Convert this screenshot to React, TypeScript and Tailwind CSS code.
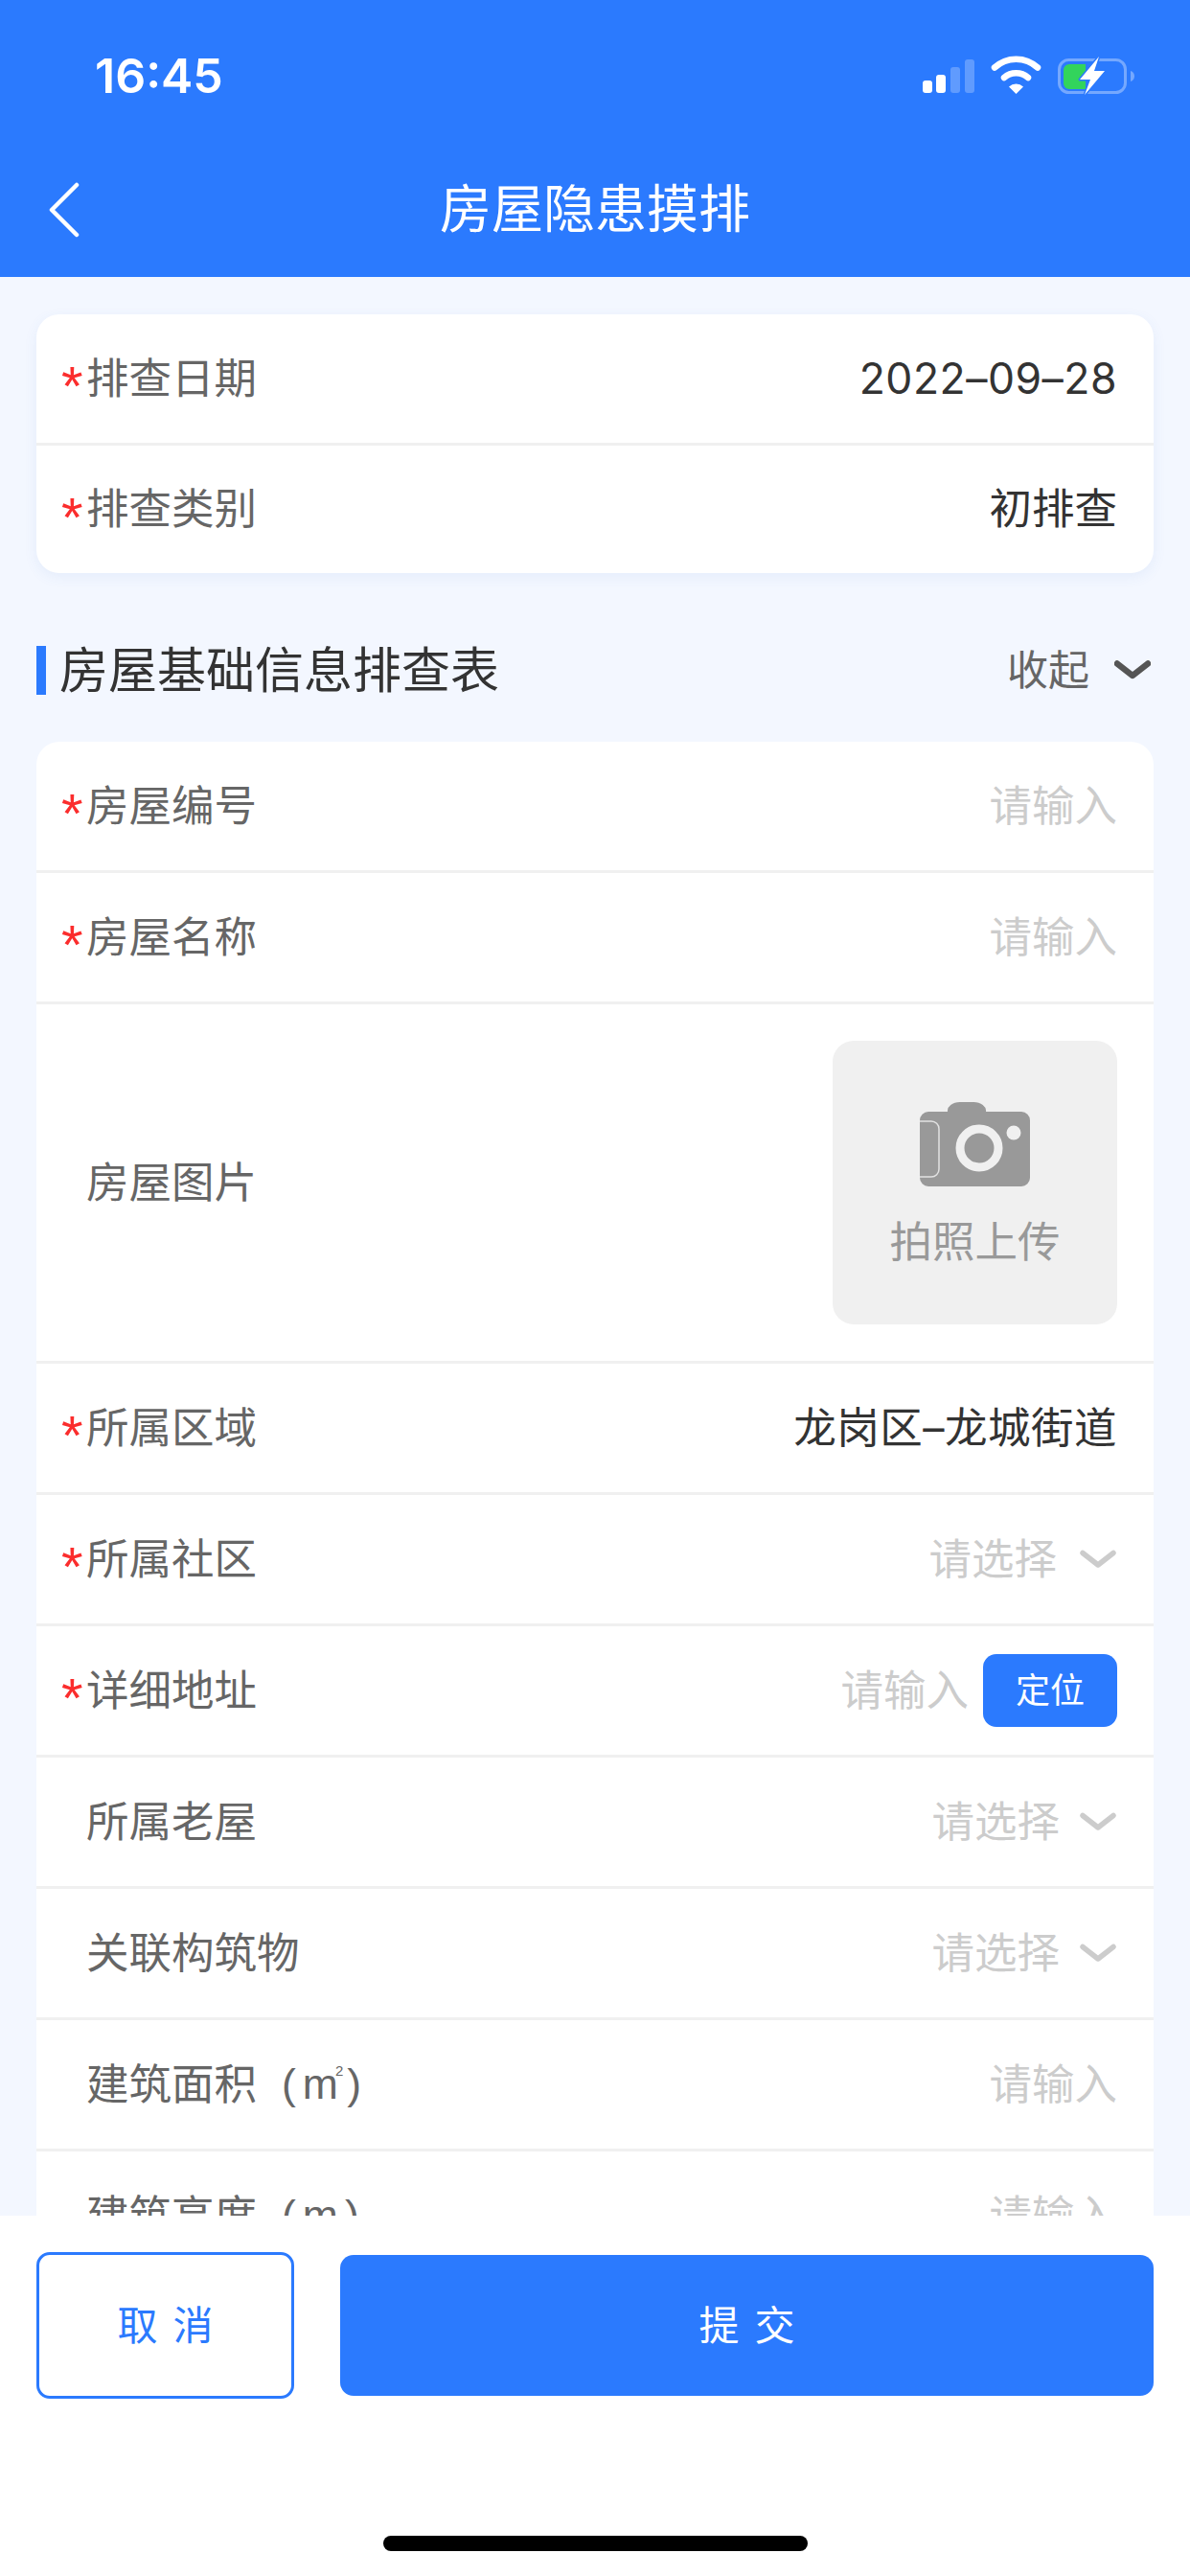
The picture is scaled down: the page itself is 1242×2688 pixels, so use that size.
import type { ReactNode } from 'react';

const font = "font-['Inter','Noto_Sans_CJK_SC',sans-serif]";

function StatusIcons() {
  return (
    <svg width="225" height="44" viewBox="960 56 225 44" className="block">
      <rect x="963" y="83" width="10" height="13" rx="3" fill="#fff" />
      <rect x="977" y="77" width="10" height="19" rx="3" fill="#fff" />
      <rect x="992" y="69" width="10" height="27" rx="3" fill="#fff" opacity="0.25" />
      <rect x="1007" y="61" width="10" height="35" rx="3" fill="#fff" opacity="0.25" />
      {/* wifi */}
      <path d="M1038 69.500a33 33 0 0 1 45 0" fill="none" stroke="#fff" strokeWidth="6.500" strokeLinecap="round" />
      <path d="M1048 80a19 19 0 0 1 25 0" fill="none" stroke="#fff" strokeWidth="6.500" strokeLinecap="round" />
      <path d="M1053 89.500l7.500 7.500 7.500-7.500a11 11 0 0 0-15 0z" fill="#fff" />
      {/* battery */}
      <rect x="1105.500" y="61.500" width="69" height="34" rx="10" fill="none" stroke="#fff" strokeOpacity="0.35" strokeWidth="3" />
      <path d="M1180 73v11a6 6 0 0 0 4-5.500 6 6 0 0 0-4-5.500z" fill="#fff" fillOpacity="0.35" />
      <rect x="1110" y="66" width="44" height="26" rx="6" fill="#32d45c" clipPath="inset(0 21px 0 0)" />
      <path d="M1147 58l-20 24h11l-6 16 21-25h-11z" fill="#fff" stroke="#2b7afe" strokeWidth="3" paintOrder="stroke" strokeLinejoin="round" />
    </svg>
  );
}

function CameraIcon() {
  return (
    <svg width="116" height="88" viewBox="0 0 116 88" className="block">
      <path
        d="M9 10h20a13 9 0 0 1 13-10h14a13 9 0 0 1 13 10h37a9 9 0 0 1 9 9v60a9 9 0 0 1-9 9H9a9 9 0 0 1-9-9V19a9 9 0 0 1 9-9z"
        fill="#999"
      />
      <path d="M0 20h12a8 8 0 0 1 8 8v42a8 8 0 0 1-8 8H0" fill="none" stroke="#e2e2e2" strokeWidth="1.500" />
      <circle cx="62" cy="48" r="20" fill="none" stroke="#f0f0f0" strokeWidth="9" />
      <circle cx="98" cy="32" r="7.500" fill="#f0f0f0" />
    </svg>
  );
}

function Chevron({ color, stroke = 5.500 }: { color: string; stroke?: number }) {
  return (
    <svg width="38" height="21" viewBox="0 0 38 21" className="block shrink-0">
      <path d="M3 3.500 19 16 35 3.500" fill="none" stroke={color} strokeWidth={stroke} strokeLinecap="round" strokeLinejoin="round" />
    </svg>
  );
}

function Row({
  label,
  required,
  last,
  children,
}: {
  label: ReactNode;
  required?: boolean;
  last?: boolean;
  children?: ReactNode;
}) {
  return (
    <div className={`flex items-center justify-between pl-[26px] pr-[38px] ${last ? 'h-[133px]' : 'h-[137px] border-b-[3px] border-[#f0f0f0]'}`}>
      <div className="flex items-center text-[44.500px] leading-none text-[#666]">
        <span className="w-[26px] h-[44px] text-[58px] leading-[60px] text-[#fb2d2d] font-['Liberation_Sans',sans-serif]">{required ? '*' : ''}</span>
        {label}
      </div>
      {children}
    </div>
  );
}

function Placeholder({ text = '请输入' }: { text?: string }) {
  return <span className="text-[44.500px] leading-none text-[#ccc]">{text}</span>;
}

function SelectValue({ tight }: { tight?: boolean }) {
  return (
    <div className={`flex items-center mr-[1px] ${tight ? 'gap-[21px]' : 'gap-[24px]'}`}>
      <Placeholder text="请选择" />
      <Chevron color="#ccc" />
    </div>
  );
}

// the unit in these labels is set narrower than the rest of the label
function UnitLabel({ name, square }: { name: string; square?: boolean }) {
  return (
    <>
      {name}
      <span className="flex items-center h-[44px] ml-[26px] font-['Liberation_Sans',sans-serif]">
        <span className="font-light">(</span>
        <span className="ml-[7px]">m</span>
        {square && <span className="text-[15px] -ml-[3px] -translate-y-[15px]">2</span>}
        <span className={`font-light ${square ? 'ml-[4px]' : 'ml-[7px]'}`}>)</span>
      </span>
    </>
  );
}

export default function App() {
  return (
    <div className={`flex flex-col h-[2688px] w-[1242px] overflow-hidden bg-[#f3f7ff] ${font}`}>
      {/* Header */}
      <div className="relative h-[289px] shrink-0 bg-[#2b7afe] text-white">
        <div className="flex items-center justify-between h-[58px] pt-[50px] box-content pl-[99px] pr-[57px]">
          <span className="text-[50px] font-semibold leading-none">16:45</span>
          <StatusIcons />
        </div>
        <div className="relative flex items-center justify-center h-[100px] mt-[61px]">
          <svg width="36" height="58" viewBox="0 0 36 58" className="absolute left-[49px] top-[21px]">
            <path d="M31 3 5 29l26 26" fill="none" stroke="#fff" strokeWidth="4.500" strokeLinecap="round" strokeLinejoin="round" />
          </svg>
          <span className="text-[54px] leading-none">房屋隐患摸排</span>
        </div>
      </div>

      {/* Form */}
      <div className="flex-1 min-h-0 overflow-hidden px-[38px] pt-[39px]">
        <div className="rounded-[24px] bg-white shadow-[0_4px_14px_rgba(60,110,200,0.08)]">
          <Row label="排查日期" required>
            <span className="text-[44.500px] leading-none tracking-[0.500px] text-[#333]">2022–09–28</span>
          </Row>
          <Row label="排查类别" required last>
            <span className="text-[44.500px] leading-none text-[#333]">初排查</span>
          </Row>
        </div>

        <div className="flex items-center justify-between h-[52px] mt-[75px] mb-[49px]">
          <div className="flex items-center gap-[14px]">
            <span className="w-[10px] h-[51px] bg-[#2b7afe]" />
            <span className="text-[51px] leading-none text-[#333]">房屋基础信息排查表</span>
          </div>
          <div className="flex items-center gap-[26px] mr-[3px] text-[43px] leading-none text-[#666]">
            收起
            <Chevron color="#555" stroke={6.500} />
          </div>
        </div>

        <div className="rounded-t-[24px] bg-white">
          <Row label="房屋编号" required>
            <Placeholder />
          </Row>
          <Row label="房屋名称" required>
            <Placeholder />
          </Row>
          <div className="flex items-center justify-between h-[375px] pl-[52px] pr-[38px] border-b-[3px] border-[#f0f0f0]">
            <span className="text-[44.500px] leading-none text-[#666]">房屋图片</span>
            <div className="flex flex-col items-center w-[297px] h-[296px] pt-[64px] rounded-[22px] bg-[#f0f0f0]">
              <CameraIcon />
              <span className="mt-[36px] text-[44.500px] leading-none text-[#999]">拍照上传</span>
            </div>
          </div>
          <Row label="所属区域" required>
            <span className="text-[44.500px] leading-none tracking-[0.500px] text-[#333]">龙岗区–龙城街道</span>
          </Row>
          <Row label="所属社区" required>
            <SelectValue />
          </Row>
          <Row label="详细地址" required>
            <div className="flex items-center gap-[15px]">
              <Placeholder />
              <button className="w-[140px] h-[76px] rounded-[14px] bg-[#2b7afe] text-[36px] leading-none text-white">定位</button>
            </div>
          </Row>
          <Row label="所属老屋">
            <SelectValue tight />
          </Row>
          <Row label="关联构筑物">
            <SelectValue tight />
          </Row>
          <Row label={<UnitLabel name="建筑面积" square />}>
            <Placeholder />
          </Row>
          <Row label={<UnitLabel name="建筑高度" />}>
            <Placeholder />
          </Row>
        </div>
      </div>

      {/* Footer */}
      <div className="shrink-0 h-[376px] bg-white px-[38px] pt-[38px]">
        <div className="flex items-center gap-[48px]">
          <button className="w-[269px] h-[153px] rounded-[14px] border-[3px] border-[#2b7afe] text-[42px] leading-none tracking-[16px] pl-[16px] text-[#2b7afe]">取消</button>
          <button className="flex-1 h-[147px] rounded-[14px] bg-[#2b7afe] text-[42px] leading-none tracking-[16px] pl-[16px] text-white">提交</button>
        </div>
        <div className="mx-auto mt-[143px] w-[443px] h-[16px] rounded-full bg-black" />
      </div>
    </div>
  );
}
